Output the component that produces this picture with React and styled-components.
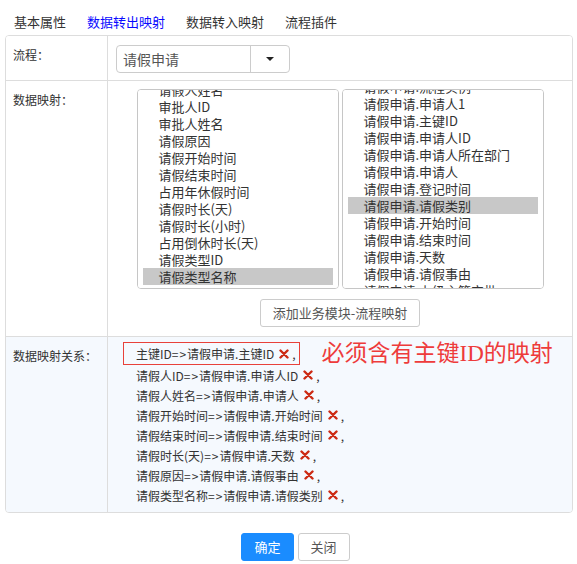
import React, { useLayoutEffect, useRef } from 'react'
import styled, { createGlobalStyle } from 'styled-components'

const GlobalStyle = createGlobalStyle`
  body {
    margin: 0;
    background: #fff;
    color: #333;
    font-family: "Noto Sans CJK SC", "Noto Sans", sans-serif;
  }
  * { box-sizing: border-box; }
`

const TabBar = styled.div`
  display: flex;
  gap: 21px;
  padding: 9px 0 0 14px;
  font-size: 13px;
  line-height: 26px;
`

const Tab = styled.span`
  color: ${p => (p.active ? '#0a0aff' : '#333')};
  cursor: pointer;
`

const Table = styled.div`
  margin: 0 4px 0 5px;
  border: 1px solid #ddd;
  border-radius: 4px;
  overflow: hidden;
`

const Row = styled.div`
  display: grid;
  grid-template-columns: 102px 1fr;
  background: ${p => p.bg || '#fff'};
  & + & {
    border-top: 1px solid #ddd;
  }
`

const Label = styled.div`
  border-right: 1px solid #ddd;
  padding: 10px 7px;
  font-size: 12px;
  line-height: 18px;
  color: #333;
`

const Cell = styled.div`
  padding: ${p => p.pad};
`

const Select = styled.div`
  display: flex;
  width: 174px;
  height: 28px;
  border: 1px solid #ccc;
  border-radius: 4px;
  background: #fff;
`

const SelectValue = styled.div`
  flex: 0 0 134px;
  border-right: 1px solid #ccc;
  padding-left: 6px;
  font-size: 14px;
  line-height: 26px;
  color: #555;
`

const SelectCaret = styled.div`
  flex: 1;
  display: flex;
  align-items: center;
  justify-content: center;
  &::after {
    content: '';
    border-left: 4px solid transparent;
    border-right: 4px solid transparent;
    border-top: 4px solid #222;
  }
`

const MapArea = styled.div`
  display: flex;
  flex-direction: column;
  align-items: center;
`

const Lists = styled.div`
  display: flex;
  gap: 3px;
`

const ListBox = styled.div`
  width: 202px;
  height: 200px;
  overflow-y: scroll;
  border: 1px solid #c6c6c6;
  border-radius: 4px;
  padding: 5px 5px 3px;
  background: #fff;

  &::-webkit-scrollbar { width: 8px; }
  &::-webkit-scrollbar-track { background: #dedede; }
  &::-webkit-scrollbar-thumb { background: #c3c3c3; }
  &::-webkit-scrollbar-button { display: none; height: 0; }
`

const Option = styled.div`
  height: 17px;
  padding-left: 16px;
  font-size: 13px;
  line-height: 17px;
  white-space: nowrap;
  color: #333;
  background: ${p => (p.selected ? '#c8c8c8' : 'transparent')};
`

const Button = styled.button`
  height: 28px;
  padding: 0 ${p => p.px || 12}px;
  border: 1px solid ${p => (p.primary ? '#1a8cff' : '#ccc')};
  border-radius: 3px;
  background: ${p => (p.primary ? '#1a8cff' : '#fff')};
  color: ${p => (p.primary ? '#fff' : '#555')};
  font-family: inherit;
  font-size: 13px;
  line-height: 26px;
  white-space: nowrap;
`

const AddButton = styled(Button)`
  margin-top: 10px;
`

const Relations = styled.div`
  display: flex;
  flex-direction: column;
  align-items: flex-start;
`

const FirstLine = styled.div`
  display: flex;
  align-items: center;
`

const Relation = styled.div`
  display: flex;
  align-items: center;
  height: ${p => (p.boxed ? 23 : 20)}px;
  padding: 0 3px 0 ${p => (p.boxed ? 12 : 13)}px;
  border: ${p => (p.boxed ? '1px solid #e8413a' : 'none')};
  font-size: 12px;
  color: #333;
  white-space: nowrap;
`

const Arrow = styled.span`
  letter-spacing: 1px;
`

const Remove = styled.svg`
  width: 10px;
  height: 10px;
  margin: 0 3px 0 5px;
`

const Note = styled.span`
  margin-left: 22px;
  font-family: "Liberation Serif", "Noto Sans CJK SC", serif;
  font-size: 23px;
  line-height: 23px;
  color: #ee3b3b;
`

const Footer = styled.div`
  display: flex;
  justify-content: center;
  gap: 4px;
  margin-top: 20px;
  padding-left: 14px;
`

const leftItems = [
  '主键ID', '流程ID', '请假人ID', '请假人姓名', '审批人ID', '审批人姓名', '请假原因',
  '请假开始时间', '请假结束时间', '占用年休假时间', '请假时长(天)', '请假时长(小时)',
  '占用倒休时长(天)', '请假类型ID', '请假类型名称',
]

const rightItems = [
  '流程实例', '申请人1', '主键ID', '申请人ID', '申请人所在部门', '申请人', '登记时间',
  '请假类别', '开始时间', '结束时间', '天数', '请假事由', '上级主管审批', '上级主管意见',
  '部门经理审批', '部门经理意见', '人事审批', '人事意见', '总经理审批', '总经理意见',
  '备注', '附件', '状态', '创建时间',
].map(s => '请假申请.' + s)

const relations = [
  ['主键ID', '请假申请.主键ID'],
  ['请假人ID', '请假申请.申请人ID'],
  ['请假人姓名', '请假申请.申请人'],
  ['请假开始时间', '请假申请.开始时间'],
  ['请假结束时间', '请假申请.结束时间'],
  ['请假时长(天)', '请假申请.天数'],
  ['请假原因', '请假申请.请假事由'],
  ['请假类型名称', '请假申请.请假类别'],
]

const List = ({ items, selected, scroll }) => {
  const ref = useRef(null)
  useLayoutEffect(() => {
    if (ref.current) ref.current.scrollTop = scroll
  }, [scroll])
  return (
    <ListBox ref={ref}>
      {items.map((item, i) =>
        <Option key={i} selected={i === selected}>{item}</Option>)}
    </ListBox>
  )
}

const RemoveIcon = () =>
  <Remove viewBox='0 0 10 10'>
    <path d='M1.5 1.5 L8.5 8.5 M8.5 1.5 L1.5 8.5' stroke='#cc2a14' strokeWidth='2.4' strokeLinecap='round' />
  </Remove>

const RelationLine = ({ pair, boxed }) =>
  <Relation boxed={boxed}>
    {pair[0]}<Arrow>=&gt;</Arrow>{pair[1]}
    <RemoveIcon />
    ,
  </Relation>

const App = () =>
  <>
    <GlobalStyle />
    <TabBar>
      <Tab>基本属性</Tab>
      <Tab active>数据转出映射</Tab>
      <Tab>数据转入映射</Tab>
      <Tab>流程插件</Tab>
    </TabBar>
    <Table>
      <Row>
        <Label>流程：</Label>
        <Cell pad='9px 8px 7px'>
          <Select>
            <SelectValue>请假申请</SelectValue>
            <SelectCaret />
          </Select>
        </Cell>
      </Row>
      <Row>
        <Label>数据映射：</Label>
        <Cell pad='8px 0 9px'>
          <MapArea>
            <Lists>
              <List items={leftItems} selected={14} scroll={1000} />
              <List items={rightItems} selected={7} scroll={17} />
            </Lists>
            <AddButton>添加业务模块-流程映射</AddButton>
          </MapArea>
        </Cell>
      </Row>
      <Row bg='#f5f9fe'>
        <Label>数据映射关系：</Label>
        <Cell pad='5px 0 7px 15px'>
          <Relations>
            <FirstLine>
              <RelationLine pair={relations[0]} boxed />
              <Note>必须含有主键ID的映射</Note>
            </FirstLine>
            {relations.slice(1).map((r, i) => <RelationLine key={i} pair={r} />)}
          </Relations>
        </Cell>
      </Row>
    </Table>
    <Footer>
      <Button primary px={12}>确定</Button>
      <Button px={12}>关闭</Button>
    </Footer>
  </>

export default App
